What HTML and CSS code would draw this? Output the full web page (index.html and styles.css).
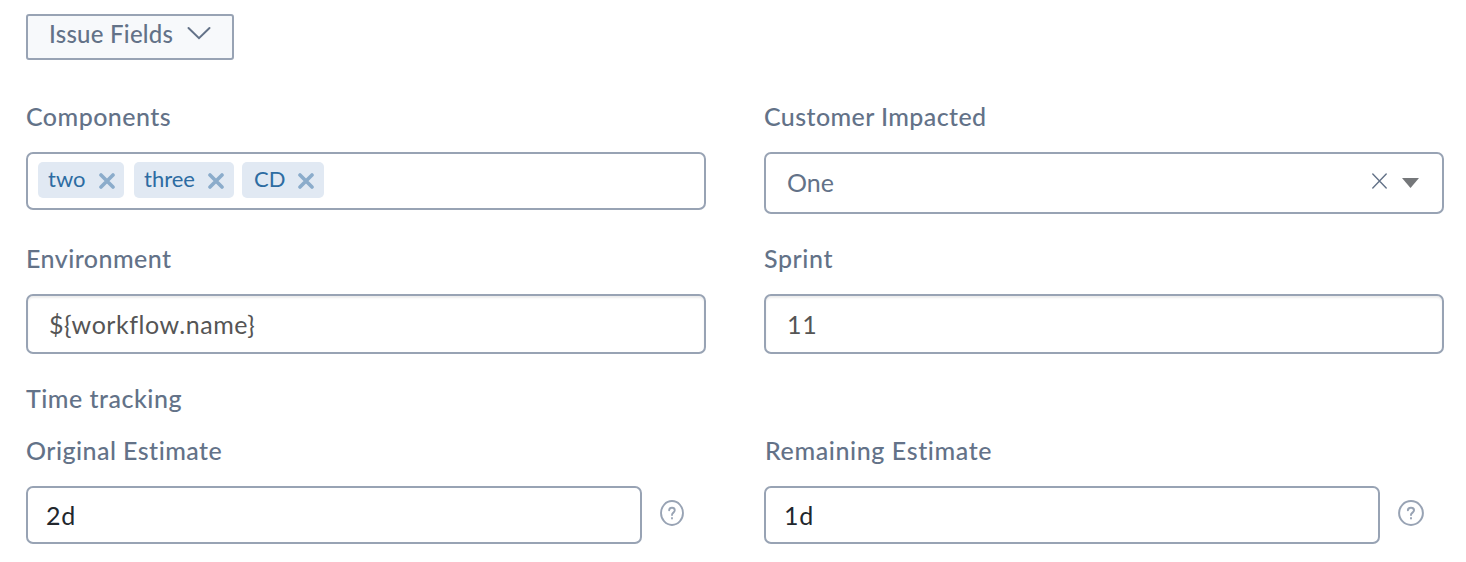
FILE: index.html
```html
<!DOCTYPE html>
<html lang="en">
<head>
<meta charset="utf-8">
<title>Issue Fields</title>
<link rel="stylesheet" href="styles.css">
</head>
<body>
<form class="form">
  <button type="button" class="menu-button">
    <span class="menu-text">Issue Fields</span>
    <svg class="chevron" viewBox="0 0 24 16"><path d="M1.5 2 12 12.2 22.5 2"/></svg>
  </button>
  <div class="row row-select">
    <div class="field">
      <div class="label"><span class="t-components">Components</span></div>
      <div class="box tags">
        <span class="tag tag-two"><span class="t-two">two</span><svg class="remove" viewBox="0 0 16 16"><path d="M2 2 14 14M14 2 2 14"/></svg></span>
        <span class="tag tag-three"><span class="t-three">three</span><svg class="remove" viewBox="0 0 16 16"><path d="M2 2 14 14M14 2 2 14"/></svg></span>
        <span class="tag tag-cd"><span class="t-cd">CD</span><svg class="remove" viewBox="0 0 16 16"><path d="M2 2 14 14M14 2 2 14"/></svg></span>
      </div>
    </div>
    <div class="field">
      <div class="label"><span class="t-customer">Customer Impacted</span></div>
      <div class="box select">
        <span class="select-value t-one">One</span>
        <svg class="clear" viewBox="0 0 15 16"><path d="M.8 1 14.2 15M14.2 1 .8 15"/></svg>
        <svg class="caret" viewBox="0 0 17 10"><path d="M0 0H17L8.5 10Z"/></svg>
      </div>
    </div>
  </div>
  <div class="row row-text">
    <div class="field">
      <div class="label"><span class="t-environment">Environment</span></div>
      <div class="box input"><span class="t-workflow">${workflow.name}</span></div>
    </div>
    <div class="field">
      <div class="label"><span class="t-sprint">Sprint</span></div>
      <div class="box input"><span class="t-eleven">11</span></div>
    </div>
  </div>
  <div class="label heading"><span class="t-time">Time tracking</span></div>
  <div class="row">
    <div class="field">
      <div class="label"><span class="t-original">Original Estimate</span></div>
      <div class="estimate">
        <div class="box duration"><span class="t-days">2d</span></div>
        <svg class="help narrow" viewBox="0 0 26 26" preserveAspectRatio="none"><circle cx="13" cy="13" r="11.9"/><path d="M9.9 10.3C10 8.6 11.3 7.8 13 7.8c1.8 0 3 1 3 2.5 0 2.4-3 2.3-3 4.8"/><path d="M13 18v.6"/></svg>
      </div>
    </div>
    <div class="field">
      <div class="label"><span class="t-remaining">Remaining Estimate</span></div>
      <div class="estimate">
        <div class="box duration"><span class="t-days">1d</span></div>
        <svg class="help" viewBox="0 0 26 26"><circle cx="13" cy="13" r="11.9"/><path d="M9.9 10.3C10 8.6 11.3 7.8 13 7.8c1.8 0 3 1 3 2.5 0 2.4-3 2.3-3 4.8"/><path d="M13 18v.6"/></svg>
      </div>
    </div>
  </div>
</form>
</body>
</html>
```
FILE: styles.css
```css
* { box-sizing: border-box; }
body { margin: 0; background: #fff; color: #637288; font-family: Lato, "Open Sans", sans-serif; font-size: 25px; font-variant-ligatures: none; }
svg { display: block; flex: none; fill: none; stroke-linecap: round; }
.form { width: 1418px; margin-left: 26px; padding-top: 14px; }
.menu-button { display: flex; align-items: flex-start; width: 208px; height: 46px; padding: 3px 0 0 21px; border: 2px solid #98a3b4; border-radius: 3px; background: #f7f9fb; color: inherit; font: 500 24px/30px Lato, sans-serif; letter-spacing: .25px; white-space: nowrap; }
.menu-text { width: 138px; text-align: left; }
.chevron { width: 24px; height: 16px; margin-top: 7px; stroke: #637288; stroke-width: 2; }
.row { display: grid; grid-template-columns: 680px 680px; column-gap: 58px; }
.row-select { margin-top: 42px; }
.row-text { margin-top: 30px; }
.label { height: 30px; margin-bottom: 20px; line-height: 29px; font-weight: 500; white-space: nowrap; letter-spacing: .45px; }
.t-customer { letter-spacing: .4px; }
.t-sprint { letter-spacing: .6px; }
.t-time { letter-spacing: .5px; }
.t-original { letter-spacing: .46px; }
.t-remaining { margin-left: 1px; letter-spacing: .6px; }
.heading { margin: 30px 0 22px; }
.box { display: flex; border: 2px solid #98a3b4; border-radius: 7px; background: #fff; }
.tags { height: 58px; padding: 8px 10px; }
.tag { display: flex; height: 36px; padding: 0 10px; border-radius: 5px; background: #e1e9f3; color: #2d6ca2; font-size: 22px; line-height: 33px; justify-content: space-between; }
.tag-two { width: 86px; margin-right: 10px; padding-right: 9px; }
.tag-three { width: 100px; margin-right: 8px; }
.tag-cd { width: 82px; padding-left: 12px; }
.remove { width: 16px; height: 16px; margin-top: 11px; stroke: #8baccb; stroke-width: 3.6; }
.select { height: 62px; padding: 0 23px 0 21px; line-height: 57px; }
.select-value { flex: 1; }
.clear { width: 15px; height: 16px; margin: 19px 15px 0 0; stroke: #637288; stroke-width: 1.4; }
.caret { width: 17px; height: 10px; margin-top: 24px; fill: #75777a; }
.input { height: 60px; padding-left: 21px; line-height: 57px; color: #555; box-shadow: inset 0 2px 2px rgba(0,0,0,.075); }
.t-workflow { letter-spacing: .55px; }
.t-eleven { letter-spacing: .8px; }
.estimate { display: flex; gap: 18px; }
.duration { width: 616px; height: 58px; padding-left: 18px; line-height: 54px; color: #22272d; letter-spacing: .7px; }
.help { width: 26px; height: 26px; margin-top: 14px; stroke: #98a3b4; stroke-width: 2; }
.narrow { width: 24px; }
```
